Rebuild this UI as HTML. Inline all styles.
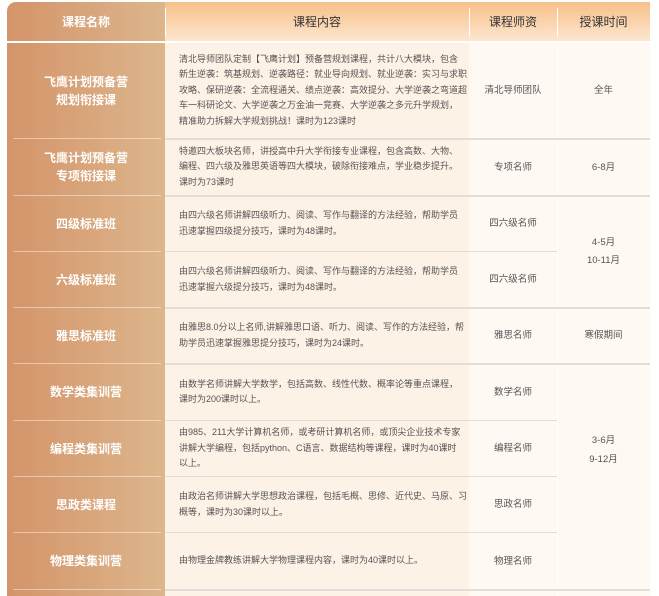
<!DOCTYPE html>
<html><head><meta charset="utf-8"><style>
*{margin:0;padding:0;box-sizing:border-box}
body{width:659px;height:596px;background:#fff;overflow:hidden;position:relative;font-family:"Liberation Sans","Noto Sans CJK SC",sans-serif}
.a{position:absolute}
.hd{top:2px;height:39px;display:flex;align-items:center;justify-content:center;font-size:12px;color:#333}
.c1{left:7px;width:158px;background:linear-gradient(90deg,#d4946a,#ddb68c)}
.c2{left:165px;width:304px;background:#fdf2e6}
.c34{left:469px;width:181px;background:#fef9f3}
.n{left:7px;width:158px;display:flex;align-items:center;justify-content:center;text-align:center;color:#fff;font-weight:bold;font-size:12px;line-height:18px}
.t{left:179px;width:290px;display:flex;align-items:center;font-size:9px;line-height:15.5px;color:#555;white-space:nowrap}
.m{display:flex;align-items:center;justify-content:center;text-align:center;font-size:9.5px;line-height:17px;color:#555}
.m3{left:469px;width:88px}
.m4{left:557px;width:93px}
.ln{height:2px;background:#e2ddd8}
.wl{height:1px;background:rgba(255,255,255,.45);left:13px;width:148px}
</style></head><body>
<div class="a c1" style="top:2px;height:39px;border-top-left-radius:9px"></div>
<div class="a" style="top:2px;left:165px;width:485px;height:39px;background:linear-gradient(180deg,#f7c089,#fde6cf)"></div>
<div class="a" style="left:165px;top:8px;width:1px;height:29px;background:#fff"></div>
<div class="a" style="left:469px;top:8px;width:1px;height:29px;background:#fff"></div>
<div class="a" style="left:557px;top:8px;width:1px;height:29px;background:#fff"></div>
<div class="a hd" style="left:7px;width:158px;color:#fff;font-weight:bold">课程名称</div>
<div class="a hd" style="left:165px;width:304px">课程内容</div>
<div class="a hd" style="left:469px;width:88px">课程师资</div>
<div class="a hd" style="left:557px;width:93px">授课时间</div>

<div class="a c1" style="top:43px;height:553px"></div>
<div class="a c2" style="top:43px;height:553px"></div>
<div class="a c34" style="top:43px;height:553px"></div>
<div class="a" style="left:557px;top:43px;width:1px;height:553px;background:#fff"></div>

<!-- row lines -->
<div class="a ln" style="top:138px;left:165px;width:485px"></div>
<div class="a ln" style="top:195px;left:165px;width:485px"></div>
<div class="a ln" style="top:251px;left:165px;width:392px;height:1px"></div>
<div class="a ln" style="top:307px;left:165px;width:485px"></div>
<div class="a ln" style="top:363px;left:165px;width:485px"></div>
<div class="a ln" style="top:420px;left:165px;width:392px;height:1px"></div>
<div class="a ln" style="top:476px;left:165px;width:392px;height:1px"></div>
<div class="a ln" style="top:532px;left:165px;width:392px;height:1px"></div>
<div class="a ln" style="top:589px;left:165px;width:485px"></div>
<div class="a wl" style="top:138px"></div>
<div class="a wl" style="top:195px"></div>
<div class="a wl" style="top:251px"></div>
<div class="a wl" style="top:307px"></div>
<div class="a wl" style="top:363px"></div>
<div class="a wl" style="top:420px"></div>
<div class="a wl" style="top:476px"></div>
<div class="a wl" style="top:532px"></div>
<div class="a wl" style="top:589px"></div>

<div class="a n" style="top:43px;height:95px">飞鹰计划预备营<br>规划衔接课</div>
<div class="a n" style="top:139px;height:56px">飞鹰计划预备营<br>专项衔接课</div>
<div class="a n" style="top:196px;height:55px">四级标准班</div>
<div class="a n" style="top:252px;height:55px">六级标准班</div>
<div class="a n" style="top:308px;height:55px">雅思标准班</div>
<div class="a n" style="top:364px;height:56px">数学类集训营</div>
<div class="a n" style="top:421px;height:55px">编程类集训营</div>
<div class="a n" style="top:477px;height:55px">思政类课程</div>
<div class="a n" style="top:533px;height:56px">物理类集训营</div>

<div class="a t" style="top:43px;height:95px">清北导师团队定制【飞鹰计划】预备营规划课程，共计八大模块，包含<br>新生逆袭：筑基规划、逆袭路径：就业导向规划、就业逆袭：实习与求职<br>攻略、保研逆袭：全流程通关、绩点逆袭：高效提分、大学逆袭之弯道超<br>车一科研论文、大学逆袭之万金油一竞赛、大学逆袭之多元升学规划，<br>精准助力拆解大学规划挑战！课时为123课时</div>
<div class="a t" style="top:139px;height:56px">特邀四大板块名师，讲授高中升大学衔接专业课程，包含高数、大物、<br>编程、四六级及雅思英语等四大模块，破除衔接难点，学业稳步提升。<br>课时为73课时</div>
<div class="a t" style="top:196px;height:55px">由四六级名师讲解四级听力、阅读、写作与翻译的方法经验，帮助学员<br>迅速掌握四级提分技巧，课时为48课时。</div>
<div class="a t" style="top:252px;height:55px">由四六级名师讲解四级听力、阅读、写作与翻译的方法经验，帮助学员<br>迅速掌握六级提分技巧，课时为48课时。</div>
<div class="a t" style="top:308px;height:55px">由雅思8.0分以上名师,讲解雅思口语、听力、阅读、写作的方法经验，帮<br>助学员迅速掌握雅思提分技巧，课时为24课时。</div>
<div class="a t" style="top:364px;height:56px">由数学名师讲解大学数学，包括高数、线性代数、概率论等重点课程，<br>课时为200课时以上。</div>
<div class="a t" style="top:421px;height:55px">由985、211大学计算机名师，或考研计算机名师，或顶尖企业技术专家<br>讲解大学编程，包括python、C语言、数据结构等课程，课时为40课时<br>以上。</div>
<div class="a t" style="top:477px;height:55px">由政治名师讲解大学思想政治课程，包括毛概、思修、近代史、马原、习<br>概等，课时为30课时以上。</div>
<div class="a t" style="top:533px;height:56px">由物理金牌教练讲解大学物理课程内容，课时为40课时以上。</div>

<div class="a m m3" style="top:43px;height:95px">清北导师团队</div>
<div class="a m m3" style="top:139px;height:56px">专项名师</div>
<div class="a m m3" style="top:196px;height:55px">四六级名师</div>
<div class="a m m3" style="top:252px;height:55px">四六级名师</div>
<div class="a m m3" style="top:308px;height:55px">雅思名师</div>
<div class="a m m3" style="top:364px;height:56px">数学名师</div>
<div class="a m m3" style="top:421px;height:55px">编程名师</div>
<div class="a m m3" style="top:477px;height:55px">思政名师</div>
<div class="a m m3" style="top:533px;height:56px">物理名师</div>

<div class="a m m4" style="top:43px;height:95px">全年</div>
<div class="a m m4" style="top:139px;height:56px">6-8月</div>
<div class="a m m4" style="top:196px;height:111px;line-height:18px">4-5月<br>10-11月</div>
<div class="a m m4" style="top:308px;height:55px">寒假期间</div>
<div class="a m m4" style="top:400px;height:100px;line-height:19px">3-6月<br>9-12月</div>
</body></html>
